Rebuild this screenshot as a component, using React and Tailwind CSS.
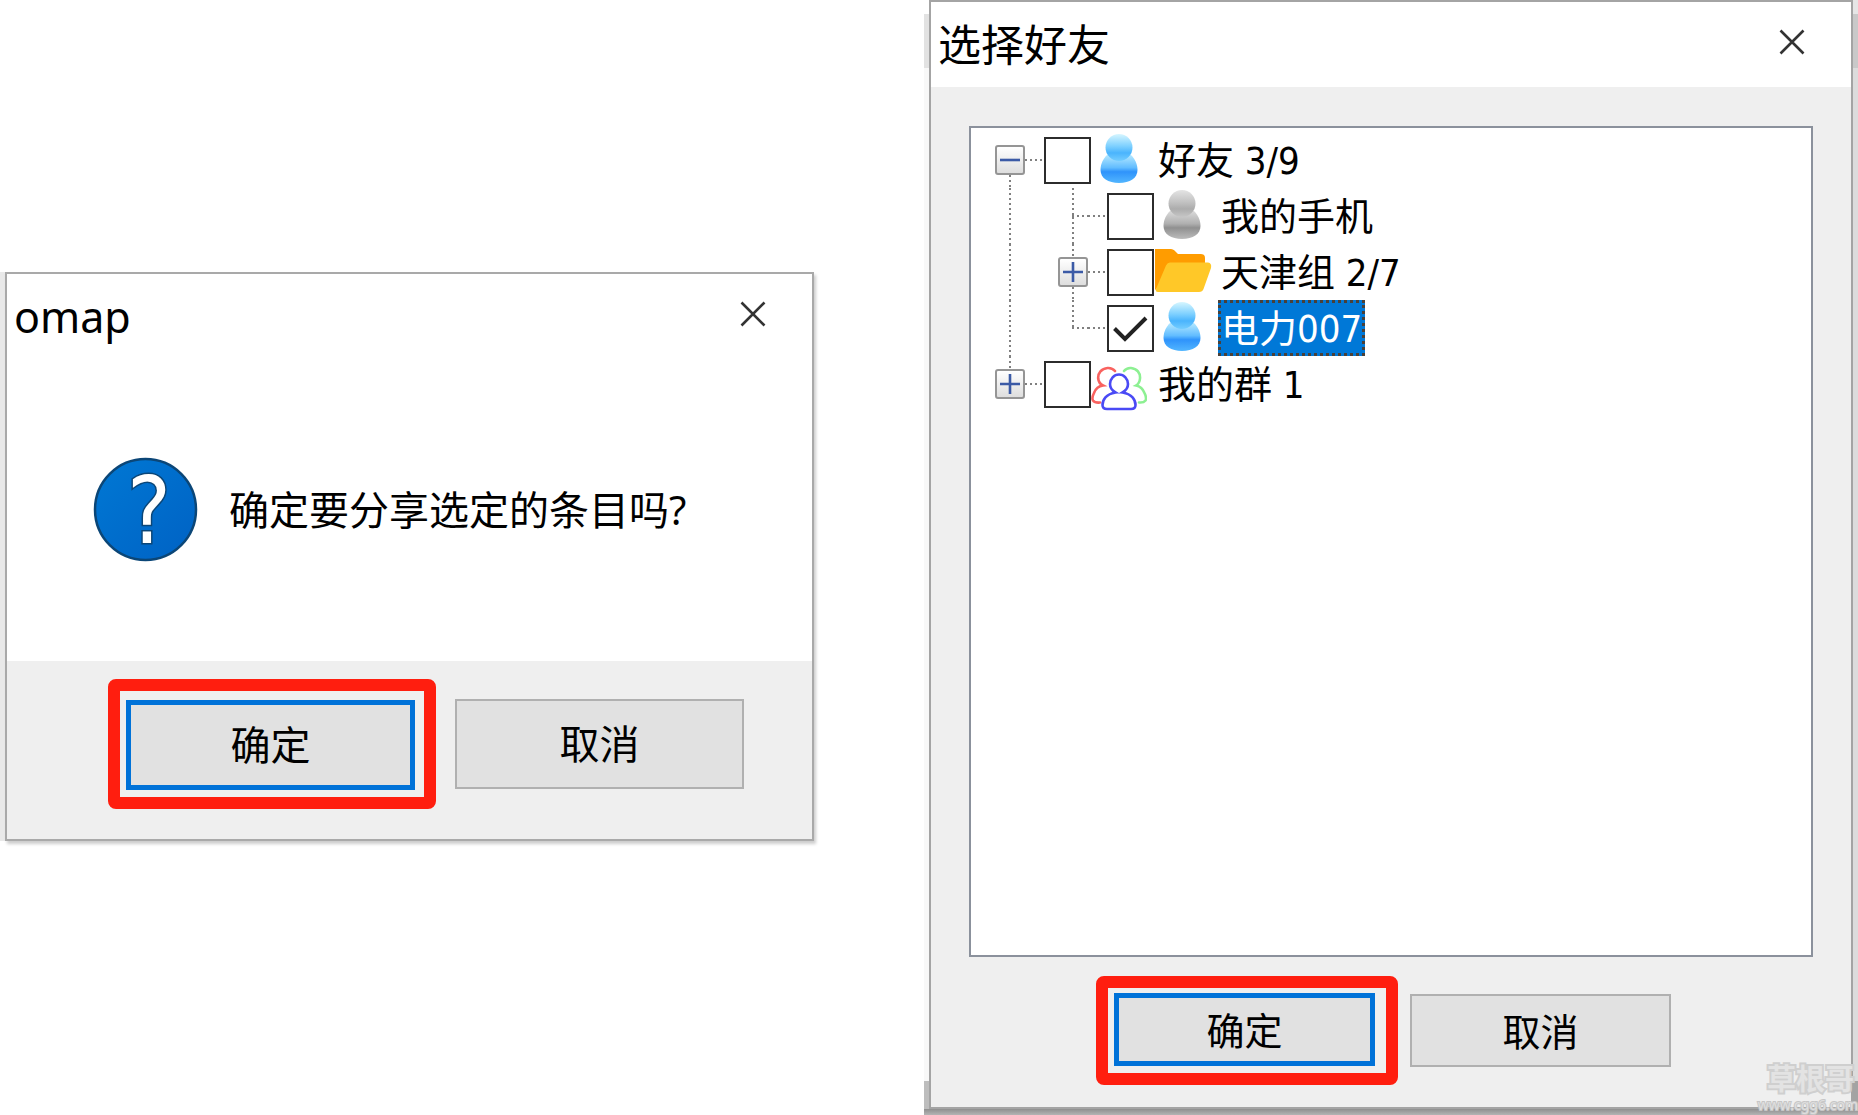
import React, { useState } from 'react'
import clsx from 'clsx'

const TREE = [
  { id: 'friends', label: '好友 3/9', depth: 0, toggle: 'minus', icon: 'user', below: true },
  { id: 'phone', label: '我的手机', depth: 1, icon: 'userGray', above: true, below: true },
  { id: 'tianjin', label: '天津组 2/7', depth: 1, toggle: 'plus', icon: 'folder', above: true, below: true },
  { id: 'dianli', label: '电力007', depth: 1, icon: 'user', above: true, selected: true },
  { id: 'groups', label: '我的群 1', depth: 0, toggle: 'plus', icon: 'group', above: true },
]

function App() {
  return (
    <main className="min-h-screen bg-white grid grid-cols-[814fr_934fr] gap-x-[110px] text-black font-['Noto_Sans','Noto_Sans_CJK_SC',sans-serif]">
      <ConfirmDialog />
      <FriendPicker />
    </main>
  )
}

function ConfirmDialog() {
  return (
    <div className="self-center flex mb-[2px]">
      <div className="w-[5px] bg-[#e9e9e9]"></div>
      <section className="flex-1 border-2 border-[#a9a9a9] bg-white shadow-[2px_3px_3px_rgba(0,0,0,0.2)]">
        <TitleBar title="omap" />
        <div className="flex items-center gap-8 pl-[87px] pt-[99px] pb-[100px]">
          <QuestionIcon />
          <p className="text-[40px] leading-[48px]">确定要分享选定的条目吗?</p>
        </div>

        {/* Footer */}
        <div className="bg-[#efefef] flex items-center justify-end gap-[19px] pt-[18px] pb-[30px] pr-[68px]">
          <div className="border-[12px] border-[#ff1e0f] rounded-lg pt-[9px] pr-[9px] pb-[7px] pl-[6px]">
            <DialogButton primary className="w-[289px] h-[90px] text-[40px]">确定</DialogButton>
          </div>
          <DialogButton className="w-[289px] h-[90px] text-[40px]">取消</DialogButton>
        </div>
      </section>
    </div>
  )
}

function FriendPicker() {
  return (
    <div className="relative flex flex-col">
      <div className="flex-1 flex">
        <div className="w-[5px] flex flex-col">
          <div className="h-[14px]"></div>
          <div className="h-[54px] bg-[#e2e2e2]"></div>
          <div className="flex-1 bg-[#f8f8f8]"></div>
          <div className="h-[28px] bg-[#bdbdbd]"></div>
        </div>

        <section className="flex-1 flex flex-col border-2 border-[#a4a4a4] bg-[#efefef]">
          <TitleBar title="选择好友" />
          <FriendTree />
          <div className="flex items-center justify-end gap-3 pt-[19px] pb-[22px] pr-[180px]">
            <div className="border-[12px] border-[#ff1e0f] rounded-lg pt-[5px] pr-[11px] pb-[7px] pl-[6px]">
              <DialogButton primary className="w-[261px] h-[73px] text-[38px]">确定</DialogButton>
            </div>
            <DialogButton className="w-[261px] h-[73px] text-[38px]">取消</DialogButton>
          </div>
        </section>

        <div className="w-[5px] flex flex-col">
          <div className="h-[14px] bg-[#e6e6e6]"></div>
          <div className="h-[54px] bg-[#c9c9c9]"></div>
          <div className="flex-1 bg-[#dcdcdc]"></div>
          <div className="h-[28px] bg-[#a3a3a3]"></div>
        </div>
      </div>
      <div className="h-[6px] bg-gradient-to-b from-[#8f8f8f] to-[#b4b4b4]"></div>

      {/* Watermark */}
      <div className="absolute right-0 bottom-0 text-right text-[#e3e3e3] pointer-events-none">
        <p className="text-[29px] leading-[32px] font-bold pr-1 [-webkit-text-stroke:4px_#cfcfcf] [paint-order:stroke_fill]">草根哥</p>
        <p className="text-[14px] leading-[20px] text-[#dedede] [-webkit-text-stroke:2px_#c6c6c6] [paint-order:stroke_fill]">www.cgg6.com</p>
      </div>
    </div>
  )
}

function TitleBar({ title }) {
  return (
    <header className="h-[85px] bg-white flex items-center justify-between pl-[7px] pr-[35px]">
      <h1 className="text-[43px] leading-[56px]">{title}</h1>
      <button type="button" aria-label="关闭" className="w-12 h-12 mb-[6px] flex items-center justify-center">
        <svg width="26" height="26" viewBox="0 0 26 26" stroke="#333" strokeWidth="2.6">
          <path d="M1.5 1.5 24.5 24.5M24.5 1.5 1.5 24.5" />
        </svg>
      </button>
    </header>
  )
}

function DialogButton({ primary, className, children }) {
  return (
    <button
      type="button"
      className={clsx(
        'block bg-[#e1e1e1] leading-[48px]',
        primary ? 'border-[5px] border-[#0072d8]' : 'border-2 border-[#b0b0b0]',
        className
      )}
    >
      {children}
    </button>
  )
}

function FriendTree() {
  const [checked, setChecked] = useState({ dianli: true })

  const toggle = (id) => setChecked((prev) => ({ ...prev, [id]: !prev[id] }))

  return (
    <ul className="flex-1 mt-[39px] mx-[38px] bg-white border-2 border-[#8b919c] pl-6 pt-1">
      {TREE.map((item) => (
        <li key={item.id} className="h-14 flex items-center">
          {/* guide line of the root level */}
          {item.depth > 0 && (
            <div className="w-[63px] self-stretch flex flex-col pl-[14px]">
              <VLine show />
            </div>
          )}

          <div className="w-[30px] self-stretch flex flex-col items-center">
            <VLine show={item.above} />
            {item.toggle ? <Expander type={item.toggle} /> : <HLine className="w-4 self-end" />}
            <VLine show={item.below} />
          </div>
          <HLine className="w-[19px]" />

          <span className="relative block w-[47px] h-[47px]">
            <input
              id={item.id}
              type="checkbox"
              checked={!!checked[item.id]}
              onChange={() => toggle(item.id)}
              className="block appearance-none w-[47px] h-[47px] bg-white border-2 border-[#2c2c2c]"
            />
            {checked[item.id] && (
              <svg className="absolute inset-0 pointer-events-none" width="47" height="47" viewBox="0 0 47 47" fill="none" stroke="#222" strokeWidth="4">
                <path d="M7.5 23.5 18 34 39 13" />
              </svg>
            )}
          </span>

          <NodeIcon name={item.icon} />
          <label
            htmlFor={item.id}
            className={clsx(
              "ml-2 h-14 leading-[52px] text-[38px] border-[3px] font-['DejaVu_Sans_Condensed','Noto_Sans_CJK_SC',sans-serif]",
              item.selected ? 'bg-[#0078d7] text-white border-dotted border-[#4a4038]' : 'border-transparent'
            )}
          >
            {item.label}
          </label>
        </li>
      ))}
    </ul>
  )
}

function VLine({ show }) {
  return (
    <div className={clsx('w-[2px] flex-1', show && 'bg-[repeating-linear-gradient(to_bottom,#808080_0_2px,transparent_2px_5px)]')}></div>
  )
}

function HLine({ className }) {
  return <div className={clsx('h-[2px] bg-[repeating-linear-gradient(to_right,#808080_0_2px,transparent_2px_5px)]', className)}></div>
}

function Expander({ type }) {
  return (
    <button
      type="button"
      aria-label={type === 'plus' ? '展开' : '折叠'}
      className="w-[30px] h-[30px] border-2 border-[#959595] rounded-[3px] bg-gradient-to-b from-white to-[#dedede] flex items-center justify-center"
    >
      <svg width="22" height="22" viewBox="0 0 22 22" stroke="#3b5aa6" strokeWidth="2.6">
        <path d={type === 'plus' ? 'M1 11H21M11 1V21' : 'M1 11H21'} />
      </svg>
    </button>
  )
}

function QuestionIcon() {
  return (
    <svg className="overflow-visible" width="103" height="103" viewBox="0 0 103 103">
      <defs>
        <linearGradient id="ask" x1="0" y1="0" x2="1" y2="1">
          <stop offset="0" stopColor="#0078d4" />
          <stop offset="1" stopColor="#0062c4" />
        </linearGradient>
      </defs>
      <circle cx="51.5" cy="51.5" r="50.5" fill="url(#ask)" stroke="#0b4677" strokeWidth="2.5" />
      <text
        x="55"
        y="85"
        textAnchor="middle"
        fontSize="92"
        fontFamily="DejaVu Sans Condensed, DejaVu Sans, sans-serif"
        fill="#fff"
        stroke="#0b4677"
        strokeWidth="3"
        paintOrder="stroke"
      >
        ?
      </text>
    </svg>
  )
}

function NodeIcon({ name }) {
  if (name === 'folder') {
    return (
      <svg className="overflow-visible" width="56" height="56" viewBox="0 0 56 56">
        <path d="M1 46V5H17Q19 5 20.500 6.500L24 10H47Q51 10 51 14V30H20Z" fill="#ff9c00" />
        <path d="M16 18.500H54Q58 19 57 24L49.500 45Q48.500 48 45 48H4Q1 48 2 45L12 21.500Q13.500 18.500 16 18.500Z" fill="#ffc828" />
      </svg>
    )
  }

  if (name === 'group') {
    return (
      <svg width="56" height="56" viewBox="0 0 56 56" fill="none" strokeWidth="2.6" strokeLinecap="round">
        <path d="M24 15C22 12.500 19.500 11.800 16.500 12C10.500 12.500 6.800 17 7.200 22.500C7.500 25.500 9 28 12 29.500C7 30 4.500 33 3 37C1.500 40 .8 42.500 2 44.500C3.500 46.500 6 46.800 9 46.500" stroke="#f9625f" />
        <path d="M33 15C35 12.500 37.500 11.800 40 12C46 12.500 49.500 17 49 22.500C48.800 25.500 47.500 28 45 29.500C50 30.500 52 33 53.500 37C55 40 55.500 42.500 54.500 44.500C53 46.500 51 46.800 48 46.500" stroke="#8df092" />
        <path d="M24.500 36.500C15 38 11.500 44 11.500 49C11.500 52 13 53 16 53H40C43 53 44.500 52 44.500 49C44.500 44 41 38 31.500 36.500C35 34.500 37 31.500 37 28A9 9.500 0 0 0 19 28C19 31.500 21 34.500 24.500 36.500Z" fill="#fff" stroke="#4a4af5" />
      </svg>
    )
  }

  const gray = name === 'userGray'
  const id = gray ? 'ug' : 'ub'
  return (
    <svg width="56" height="56" viewBox="0 0 56 56">
      <defs>
        <linearGradient id={`${id}-head`} x1="0" y1="0" x2="0" y2="1">
          <stop offset="0" stopColor={gray ? '#e4e4e4' : '#d6f6ff'} />
          <stop offset="0.45" stopColor={gray ? '#c2c2c2' : '#7dd0ff'} />
          <stop offset="0.7" stopColor={gray ? '#acacac' : '#4ab4fd'} />
          <stop offset="1" stopColor={gray ? '#c6c6c6' : '#74cdff'} />
        </linearGradient>
        <linearGradient id={`${id}-body`} x1="0" y1="0" x2="0" y2="1">
          <stop offset="0" stopColor={gray ? '#dadada' : '#b4e8ff'} />
          <stop offset="0.45" stopColor={gray ? '#b0b0b0' : '#62bdff'} />
          <stop offset="0.6" stopColor={gray ? '#909090' : '#2f93fb'} />
          <stop offset="1" stopColor={gray ? '#bcbcbc' : '#52b6ff'} />
        </linearGradient>
      </defs>
      <path d="M16 23C12 27 9.500 32 9.500 38C9.500 46 17 51 28 51S46.500 46 46.500 38C46.500 32 44 27 40 23Z" fill={`url(#${id}-body)`} />
      <circle cx="28" cy="15.500" r="13.500" fill={`url(#${id}-head)`} />
    </svg>
  )
}

export default App
